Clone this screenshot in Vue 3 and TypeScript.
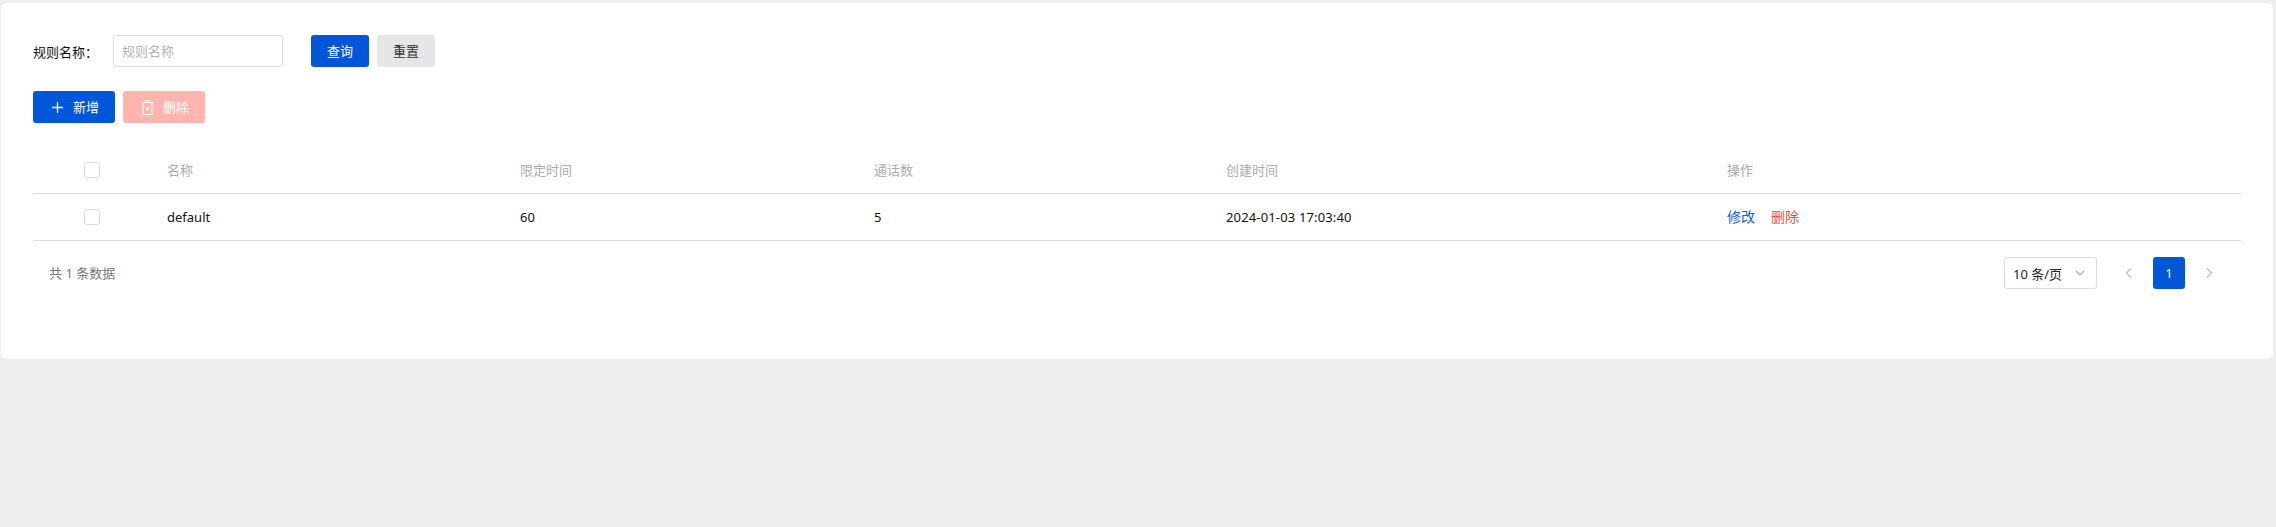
<script setup lang="ts">
import { ref } from 'vue'

interface Rule {
  name: string
  limit: number
  calls: number
  created: string
}

const keyword = ref('')
const rows = ref<Rule[]>([
  { name: 'default', limit: 60, calls: 5, created: '2024-01-03 17:03:40' }
])
</script>

<template>
  <div class="page">
    <div class="card">
      <form class="search" @submit.prevent>
        <label class="search-label">规则名称：</label>
        <input v-model="keyword" class="search-input" placeholder="规则名称" />
        <div class="search-btns">
          <button class="btn btn-primary" type="button"><span class="cjk">查询</span></button>
          <button class="btn btn-gray" type="button"><span class="cjk">重置</span></button>
        </div>
      </form>

      <div class="toolbar">
        <button class="btn btn-wide btn-primary" type="button">
          <svg class="icon" viewBox="0 0 11 11" width="11" height="11">
            <path d="M5.500 0v11M0 5.500h11" fill="none" stroke="currentColor" stroke-width="1.300" />
          </svg>
          <span class="cjk">新增</span>
        </button>
        <button class="btn btn-wide btn-danger" type="button">
          <svg class="icon" viewBox="0 0 11 15" width="11" height="15">
            <path d="M0 2.500h11M3.500 2.500V.5h4v2M1 2.500v12h9v-12M4 7l3 3M7 7l-3 3" fill="none" stroke="currentColor" stroke-width="1.100" />
          </svg>
          <span class="cjk">删除</span>
        </button>
      </div>

      <div class="table">
        <div class="tr th">
          <div class="td-check"><span class="checkbox"></span></div>
          <div class="td cjk">名称</div>
          <div class="td cjk">限定时间</div>
          <div class="td cjk">通话数</div>
          <div class="td cjk">创建时间</div>
          <div class="td cjk">操作</div>
        </div>
        <div v-for="row in rows" :key="row.name" class="tr">
          <div class="td-check"><span class="checkbox"></span></div>
          <div class="td">{{ row.name }}</div>
          <div class="td">{{ row.limit }}</div>
          <div class="td">{{ row.calls }}</div>
          <div class="td date">{{ row.created }}</div>
          <div class="td actions cjk">
            <a class="link-edit">修改</a>
            <a class="link-del">删除</a>
          </div>
        </div>
      </div>

      <div class="footer">
        <span class="total cjk">共 1 条数据</span>
        <div class="pager">
          <div class="size-select">
            <span>10 条/页</span>
            <svg viewBox="0 0 12 12" width="12" height="12">
              <path d="M2 4l4 4 4-4" fill="none" stroke="#aaa" stroke-width="1.100" />
            </svg>
          </div>
          <svg class="arrow arrow-prev" viewBox="0 0 12 12" width="12" height="12">
            <path d="M8 1.500L3.500 6 8 10.500" fill="none" stroke="#bbb" stroke-width="1.100" />
          </svg>
          <span class="page-num">1</span>
          <svg class="arrow arrow-next" viewBox="0 0 12 12" width="12" height="12">
            <path d="M4 1.500L8.500 6 4 10.500" fill="none" stroke="#bbb" stroke-width="1.100" />
          </svg>
        </div>
      </div>
    </div>
  </div>
</template>

<style>
html,
body {
  margin: 0;
  background: #eeeeee;
}
</style>

<style scoped>
.page {
  height: 527px;
  padding: 3px 3px 0 1px;
  box-sizing: border-box;
  font-family: "Noto Sans", "Noto Sans CJK SC", sans-serif;
  font-size: 13px;
  color: #111;
}
.card {
  height: 356px;
  box-sizing: border-box;
  padding: 32px 32px 0;
  background: #fff;
  border-radius: 6px;
}
/* CJK glyphs sit a little low with this stack */
.cjk {
  padding-bottom: 2px;
}
.search {
  display: flex;
  align-items: center;
  height: 32px;
}
.search-label {
  width: 80px;
}
.search-input {
  width: 170px;
  height: 32px;
  box-sizing: border-box;
  padding: 0 8px;
  border: 1px solid #ddd;
  border-radius: 3px;
  outline: none;
  font: inherit;
}
.search-input::placeholder {
  color: #b3b3b3;
}
.search-btns {
  display: flex;
  gap: 8px;
  margin-left: 28px;
}
.btn {
  display: flex;
  align-items: center;
  justify-content: center;
  width: 58px;
  height: 32px;
  padding: 0;
  border: none;
  border-radius: 3px;
  font: inherit;
}
.btn-wide {
  width: 82px;
  justify-content: flex-start;
  gap: 10px;
  padding-left: 19px;
}
.btn-primary {
  background: #0256d8;
  color: #fff;
}
.btn-gray {
  background: #e6e6e6;
  color: #333;
}
.btn-danger {
  background: #ffb4ad;
  color: #fff;
}
.toolbar {
  display: flex;
  gap: 8px;
  margin-top: 24px;
}
.table {
  margin-top: 24px;
}
.tr {
  display: grid;
  grid-template-columns: 118px 353px 354px 352px 501px 1fr;
  align-items: center;
  height: 47px;
  box-sizing: border-box;
  border-bottom: 1px solid #ddd;
}
.th {
  color: #aaa;
}
.td {
  padding-left: 16px;
}
.date {
  letter-spacing: 0.15px;
}
.td-check {
  display: flex;
  justify-content: center;
}
.checkbox {
  display: block;
  width: 16px;
  height: 16px;
  box-sizing: border-box;
  border: 1px solid #ddd;
  border-radius: 3px;
}
.actions {
  display: flex;
  gap: 16px;
  font-size: 14px;
}
.link-edit {
  color: #0f62e0;
}
.link-del {
  color: #e0524a;
}
.footer {
  display: flex;
  align-items: center;
  justify-content: space-between;
  margin-top: 16px;
  padding-left: 16px;
}
.total {
  color: #777;
}
.pager {
  display: flex;
  align-items: center;
  padding-right: 26px;
}
.size-select {
  display: flex;
  align-items: center;
  justify-content: space-between;
  width: 93px;
  height: 32px;
  box-sizing: border-box;
  padding: 0 10px 0 8px;
  border: 1px solid #ddd;
  border-radius: 3px;
  color: #222;
}
.arrow-prev {
  margin: 0 18px 0 26px;
}
.arrow-next {
  margin-left: 18px;
}
.page-num {
  display: flex;
  align-items: center;
  justify-content: center;
  width: 32px;
  height: 32px;
  border-radius: 3px;
  background: #0256d8;
  color: #fff;
}
</style>
